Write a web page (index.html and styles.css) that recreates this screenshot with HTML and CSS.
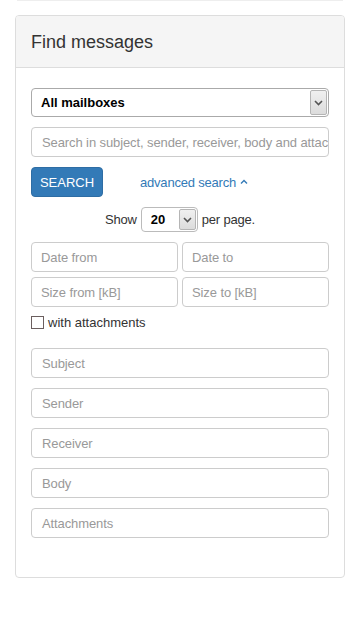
FILE: index.html
```html
<!DOCTYPE html>
<html>
<head>
<meta charset="utf-8">
<link rel="stylesheet" href="styles.css">
</head>
<body>
<div class="topline"></div>
<div class="container">
  <div class="panel">
    <div class="panel-heading"><h3 class="panel-title">Find messages</h3></div>
    <div class="panel-body">
      <div class="select select-wide">
        <span class="select-value">All mailboxes</span>
        <span class="select-arrow"><svg width="9" height="6" viewBox="0 0 9 6"><path d="M1 1 L4.5 4.5 L8 1" fill="none" stroke="#555" stroke-width="1.6"/></svg></span>
      </div>
      <div class="input mt10"><span class="ph">Search in subject, sender, receiver, body and attach</span></div>
      <div class="actions mt10">
        <div class="btn">SEARCH</div>
        <a class="adv">advanced search <svg width="8" height="6" viewBox="0 0 8 6"><path d="M1 4.5 L4 1.5 L7 4.5" fill="none" stroke="#337ab7" stroke-width="1.4"/></svg></a>
      </div>
      <div class="perpage">
        <span>Show</span>
        <div class="select select-small">
          <span class="select-value">20</span>
          <span class="select-arrow"><svg width="9" height="6" viewBox="0 0 9 6"><path d="M1 1 L4.5 4.5 L8 1" fill="none" stroke="#555" stroke-width="1.6"/></svg></span>
        </div>
        <span>per page.</span>
      </div>
      <div class="row2 mt10">
        <div class="input"><span class="ph ph-sm">Date from</span></div>
        <div class="input"><span class="ph ph-sm">Date to</span></div>
      </div>
      <div class="row2 mt5">
        <div class="input"><span class="ph ph-sm">Size from [kB]</span></div>
        <div class="input"><span class="ph ph-sm">Size to [kB]</span></div>
      </div>
      <label class="check"><span class="box"></span><span>with attachments</span></label>
      <div class="fields">
        <div class="input"><span class="ph">Subject</span></div>
        <div class="input"><span class="ph">Sender</span></div>
        <div class="input"><span class="ph">Receiver</span></div>
        <div class="input"><span class="ph">Body</span></div>
        <div class="input"><span class="ph">Attachments</span></div>
      </div>
    </div>
  </div>
</div>
</body>
</html>
```
FILE: styles.css
```css
* { box-sizing: border-box; }
html, body { margin: 0; padding: 0; background: #fff; }
body {
  font-family: "Liberation Sans", Arial, sans-serif;
  font-size: 14px;
  color: #333;
}
.topline {
  height: 1px;
  margin: 0 17px;
  background: #eee;
}
.container { padding: 14px 15px 0; }
.panel {
  border: 1px solid #ddd;
  border-radius: 4px;
  background: #fff;
}
.panel-heading {
  background: #f5f5f5;
  border-bottom: 1px solid #ddd;
  border-radius: 3px 3px 0 0;
  height: 52px;
  padding: 0 15px;
  display: flex;
  align-items: center;
}
.panel-title {
  margin: 0;
  font-size: 18px;
  font-weight: normal;
  color: #333;
  position: relative;
  top: 1px;
}
.panel-body { padding: 20px 15px 39px; }
.mt10 { margin-top: 10px; }
.mt5 { margin-top: 5px; }
.select {
  display: flex;
  align-items: stretch;
  border: 1px solid #aaa;
  border-radius: 4px;
  background: #fff;
  color: #000;
  font-weight: bold;
  overflow: hidden;
}
.select-wide { height: 29px; }
.select-value {
  flex: 1;
  display: flex;
  align-items: center;
  padding-left: 9px;
  font-size: 13px;
}
.select-arrow {
  width: 17px;
  margin: 1px;
  border: 1px solid #b5b5b5;
  border-radius: 2px;
  background: linear-gradient(#f0f0f0, #dcdcdc);
  display: flex;
  align-items: center;
  justify-content: center;
}
.input {
  height: 30px;
  border: 1px solid #ccc;
  border-radius: 4px;
  display: flex;
  align-items: center;
  padding-left: 10px;
  overflow: hidden;
  white-space: nowrap;
  background: #fff;
}
.ph { color: #999; font-size: 13px; letter-spacing: -0.1px; }
.ph-sm { margin-left: -1px; }
.actions {
  display: flex;
  align-items: center;
}
.btn {
  width: 72px;
  height: 30px;
  background: #337ab7;
  border: 1px solid #2e6da4;
  border-radius: 4px;
  color: #fff;
  font-size: 13px;
  display: flex;
  align-items: center;
  justify-content: center;
}
.adv {
  margin-left: 37px;
  color: #337ab7;
  font-size: 13px;
  letter-spacing: -0.2px;
  display: flex;
  align-items: center;
  gap: 4px;
}
.perpage {
  margin-top: 10px;
  display: flex;
  justify-content: center;
  align-items: center;
  gap: 4px;
  font-size: 13px;
  letter-spacing: -0.2px;
}
.select-small {
  width: 57px;
  height: 25px;
  border-color: #bbb;
  letter-spacing: 0;
}
.select-small .select-value { font-size: 13px; padding-left: 9px; }
.row2 {
  display: grid;
  grid-template-columns: 1fr 1fr;
  gap: 4px;
}
.check {
  margin-top: 8px;
  display: flex;
  align-items: center;
  gap: 4px;
  font-size: 13px;
  color: #333;
}
.box {
  width: 13px;
  height: 13px;
  border: 1px solid #6b5f5f;
  background: #fff;
}
.fields {
  margin-top: 18px;
  display: flex;
  flex-direction: column;
  gap: 10px;
}
```
